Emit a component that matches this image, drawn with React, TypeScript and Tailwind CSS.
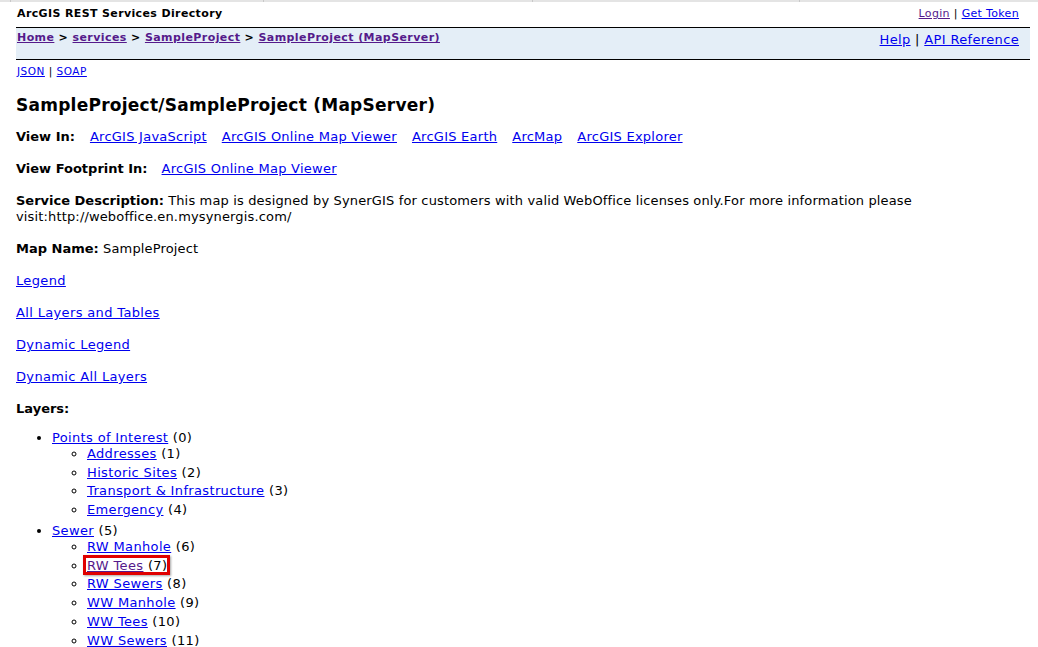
import React from "react";

const font = { fontFamily: '"DejaVu Sans", Verdana, sans-serif' };

function A({
  children,
  visited = false,
  className = "",
}: {
  children: React.ReactNode;
  visited?: boolean;
  className?: string;
}) {
  return (
    <a
      href="#"
      className={`underline ${visited ? "text-[#551a8b]" : "text-[#0000ee]"} ${className}`}
    >
      {children}
    </a>
  );
}

const poi = [
  ["Addresses", 1],
  ["Historic Sites", 2],
  ["Transport & Infrastructure", 3],
  ["Emergency", 4],
] as const;

const sewer = [
  ["RW Manhole", 6],
  ["RW Tees", 7],
  ["RW Sewers", 8],
  ["WW Manhole", 9],
  ["WW Tees", 10],
  ["WW Sewers", 11],
] as const;

function SubList({ items }: { items: readonly (readonly [string, number])[] }) {
  return (
    <ul className="list-[circle] pl-[35px]">
      {items.map(([name, id], i) => (
        <li key={id} className={i === 0 ? "" : "mt-[2.7px]"}>
          {id === 7 ? (
            <span className="relative">
              <span className="pointer-events-none absolute -bottom-[2px] -left-[4px] -right-[3px] -top-[3px] border-[3px] border-[#e00000] shadow-[1px_1px_2px_rgba(0,0,0,0.35)]" />
              <A visited>{name}</A> ({id})
            </span>
          ) : (
            <>
              <A>{name}</A> ({id})
            </>
          )}
        </li>
      ))}
    </ul>
  );
}

function Label({ children }: { children: React.ReactNode }) {
  return <b className="tracking-normal">{children}</b>;
}

export default function App() {
  return (
    <div className="min-h-[647px] bg-white text-black" style={font}>
      {/* browser strip */}
      <div className="flex h-[2px] bg-[#e4e4e4]">
        <div className="ml-[10px] w-px bg-[#c8c8c8]" />
        <div className="ml-[252px] w-px bg-[#c8c8c8]" />
        <div className="ml-[268px] w-px bg-[#c8c8c8]" />
        <div className="ml-[266px] w-px bg-[#c8c8c8]" />
      </div>

      <div className="ml-[16px] mr-[8px]">
        <div className="flex h-[25px] items-center justify-between pl-[1px] pr-[11px]">
          <span className="text-[11px] font-bold tracking-[0.37px]">
            ArcGIS REST Services Directory
          </span>
          <span className="text-[11px] tracking-[0.33px]">
            <A visited>Login</A> | <A>Get Token</A>
          </span>
        </div>
        <div className="flex h-[33px] justify-between border-y border-black bg-[#e4eef7] pl-[1px] pr-[11px]">
          <div className="pt-[2px] text-[11px] font-bold leading-[16px] tracking-[0.42px]">
            <A visited>Home</A> &gt; <A visited>services</A> &gt; <A visited>SampleProject</A>{" "}
            &gt; <A visited>SampleProject (MapServer)</A>
          </div>
          <div className="pt-[4px] text-[13px] leading-[16px] tracking-[0.35px]">
            <A>Help</A> | <A>API Reference</A>
          </div>
        </div>
      </div>

      <div className="px-[16px] text-[13px] leading-[16px] tracking-[0.15px]">
        <div className="mt-[5px] pl-[1px] text-[10.5px] leading-[12px] tracking-[0.5px]">
          <A>JSON</A> | <A>SOAP</A>
        </div>

        <h2 className="mt-[18px] text-[17px] font-bold leading-[20px] tracking-[0.25px]">
          SampleProject/SampleProject (MapServer)
        </h2>

        <div className="mt-[14px]">
          <Label>View In:</Label>
          <span className="ml-[15px] inline-flex gap-[15px] tracking-[0.25px]">
            <A>ArcGIS JavaScript</A>
            <A>ArcGIS Online Map Viewer</A>
            <A>ArcGIS Earth</A>
            <A>ArcMap</A>
            <A>ArcGIS Explorer</A>
          </span>
        </div>

        <div className="mt-[16px]">
          <Label>View Footprint In:</Label>
          <span className="ml-[14px] tracking-[0.25px]">
            <A>ArcGIS Online Map Viewer</A>
          </span>
        </div>

        <div className="mt-[16px]">
          <Label>Service Description:</Label> This map is designed by SynerGIS for customers with
          valid WebOffice licenses only.For more information please
          <br />
          visit:http://weboffice.en.mysynergis.com/
        </div>

        <div className="mt-[16px]">
          <Label>Map Name:</Label> SampleProject
        </div>

        <div className="tracking-[0.35px]">
          <div className="mt-[16px]">
            <A>Legend</A>
          </div>
          <div className="mt-[16px]">
            <A>All Layers and Tables</A>
          </div>
          <div className="mt-[16px]">
            <A>Dynamic Legend</A>
          </div>
          <div className="mt-[16px]">
            <A>Dynamic All Layers</A>
          </div>

          <div className="mt-[16px]">
            <Label>Layers:</Label>
          </div>

          <ul className="mt-[13px] list-disc pl-[36px]">
            <li>
              <A>Points of Interest</A> (0)
              <SubList items={poi} />
            </li>
            <li className="mt-[5px]">
              <A>Sewer</A> (5)
              <SubList items={sewer} />
            </li>
          </ul>
        </div>
      </div>
    </div>
  );
}
